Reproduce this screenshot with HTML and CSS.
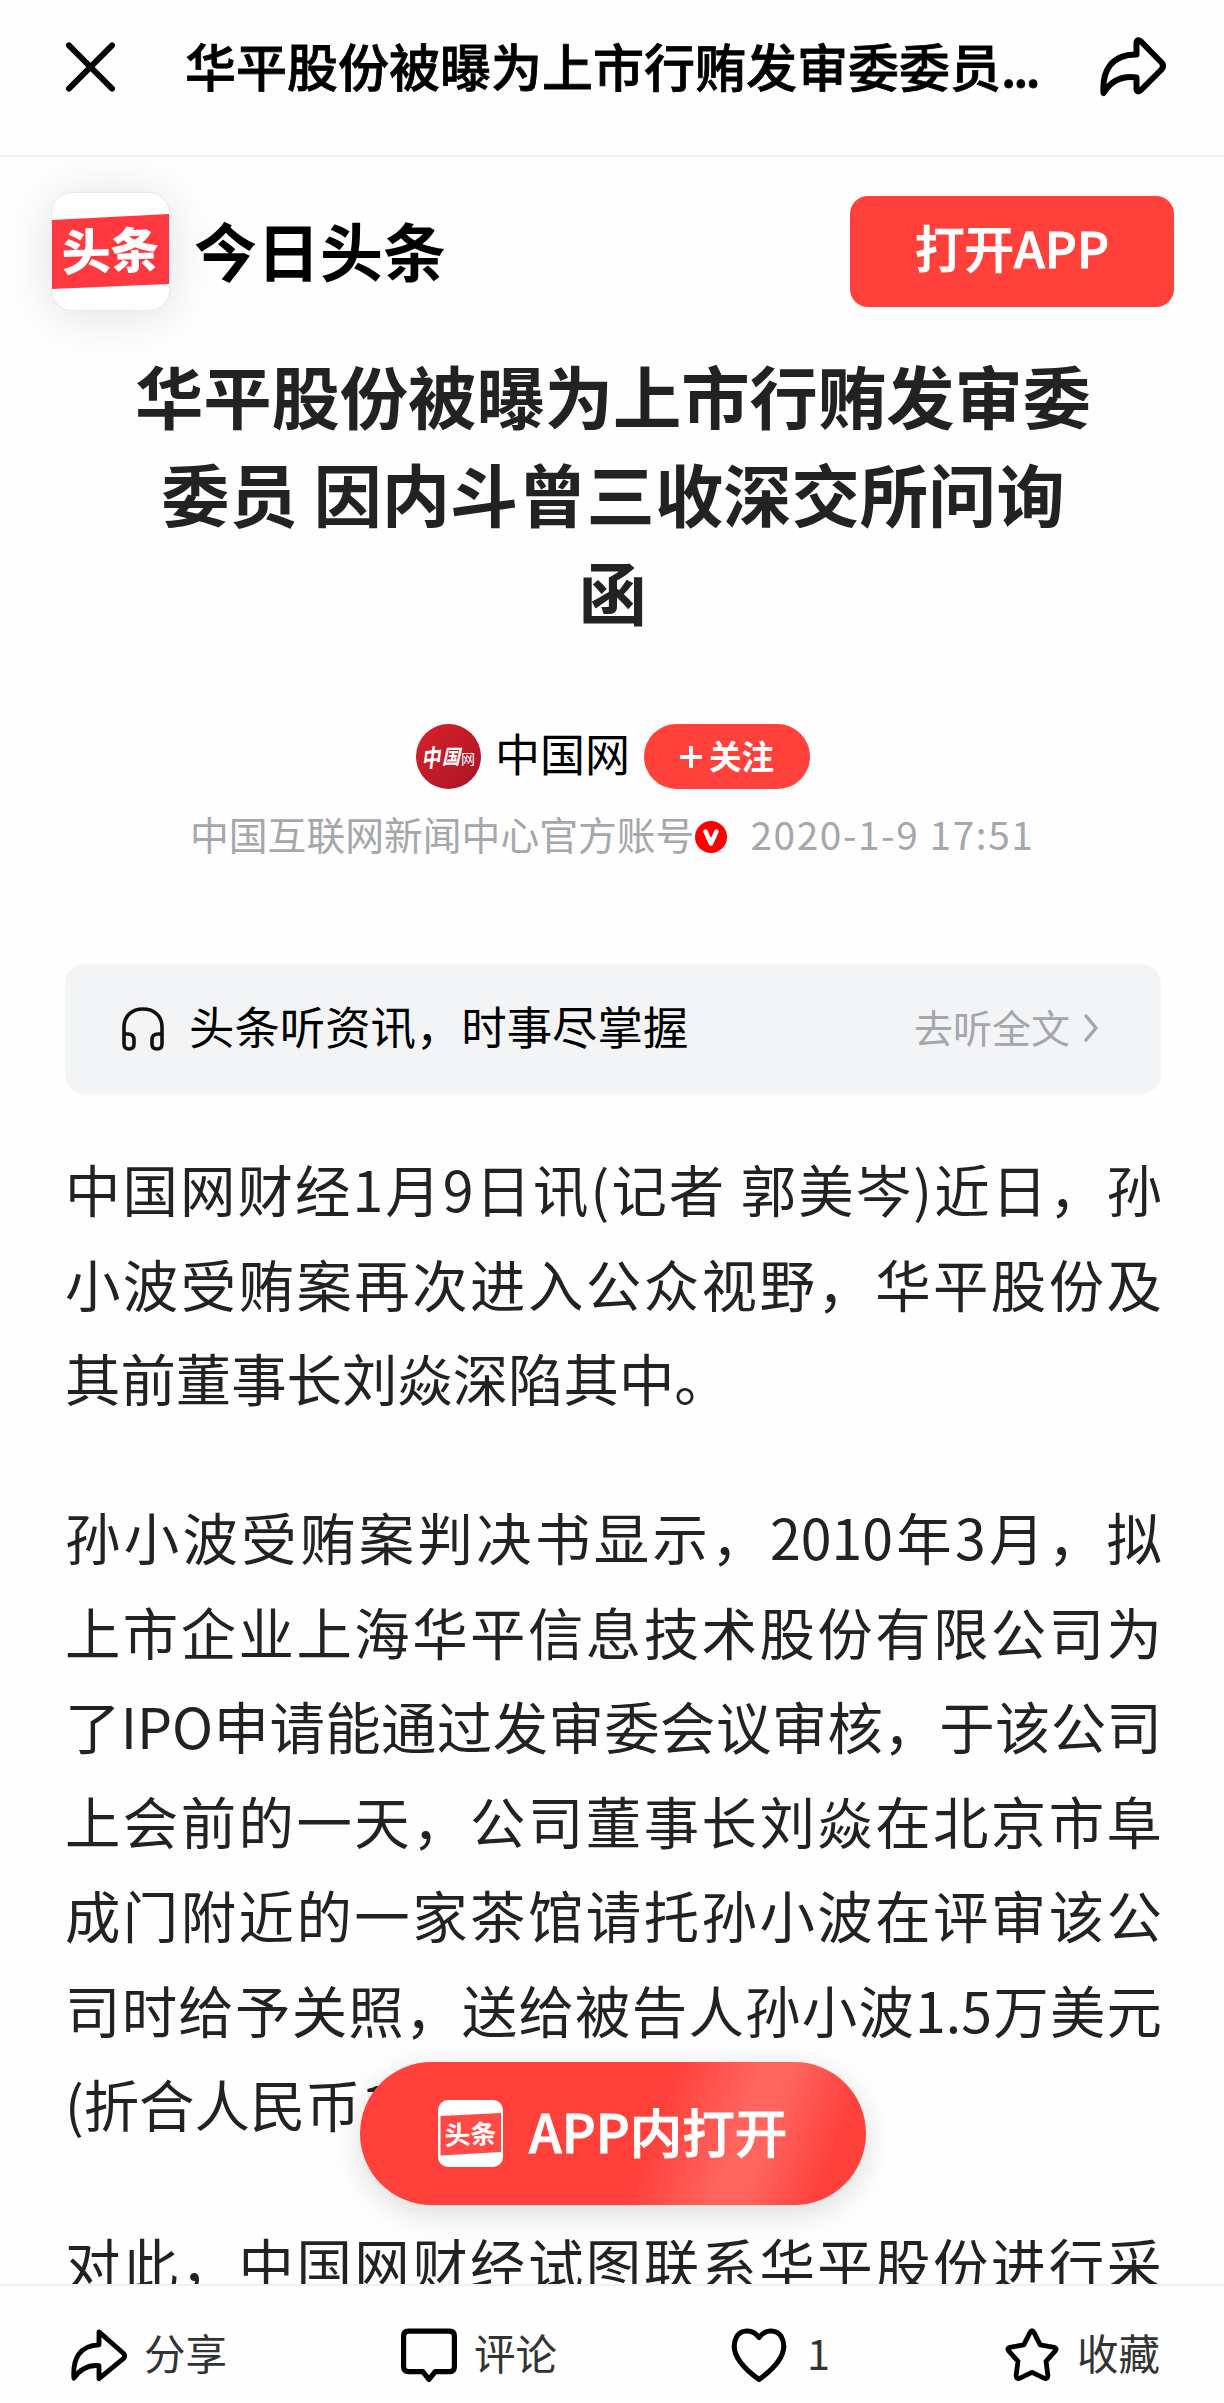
FILE: index.html
```html
<!DOCTYPE html>
<html lang="zh-CN">
<head>
  <meta charset="UTF-8">
  <title>华平股份被曝为上市行贿发审委委员 因内斗曾三收深交所问询函</title>
  <link rel="stylesheet" href="styles.css">
</head>
<body>
  <div class="page">
    <header class="topbar">
      <svg class="close" viewBox="0 0 50 50"><path d="M3 3L47 47M47 3L3 47"/></svg>
      <div class="topbar-title">华平股份被曝为上市行贿发审委委员<span class="dots">...</span></div>
      <svg class="share" viewBox="0 0 66 60"><path d="M36.500 17.500V5.500Q37.500 1.500 41 4.500L61.500 25.500Q64.500 29 61.500 32.500L41 53Q37.500 56 36.500 52.500V40.500C22 38.500 11 44 3.500 56C2 34 11 17.500 36.500 17.500Z"/></svg>
    </header>

    <main class="content">
      <div class="app-bar">
        <svg class="logo" viewBox="0 0 117 117">
          <path class="band" d="M0 27L117 21V91L0 96Z"/>
          <text x="58.500" y="76" transform="rotate(-2 58 58)">头条</text>
        </svg>
        <div class="app-name">今日头条</div>
        <button class="open-app">打开APP</button>
      </div>

      <h1>华平股份被曝为上市行贿发审委<br>委员 因内斗曾三收深交所问询<br>函</h1>

      <div class="author">
        <svg class="avatar" viewBox="0 0 65 65">
          <defs>
            <linearGradient id="avatarBg" x1="0" y1="0" x2="1" y2="1">
              <stop offset="0" stop-color="#d8222c"/>
              <stop offset="1" stop-color="#a91425"/>
            </linearGradient>
          </defs>
          <circle cx="32.500" cy="32.500" r="32.500" fill="url(#avatarBg)"/>
          <text class="brush" x="5" y="43" font-size="24" textLength="19" lengthAdjust="spacingAndGlyphs" transform="rotate(-4 14 34)">中</text>
          <text class="brush" x="26" y="40" font-size="20" textLength="18" lengthAdjust="spacingAndGlyphs">国</text>
          <text class="thin" x="45" y="40" font-size="14">网</text>
        </svg>
        <span class="author-name">中国网</span>
        <button class="follow"><svg viewBox="0 0 22 22"><path d="M11 0V22M0 11H22"/></svg><span>关注</span></button>
      </div>
      <div class="meta">
        <span class="meta-desc">中国互联网新闻中心官方账号</span>
        <svg class="verified" viewBox="0 0 32 32"><circle cx="16" cy="16" r="16"/><path d="M10.500 10.500L16 22.500L21.500 10.500"/></svg>
        <span class="meta-time">2020-1-9 17:51</span>
      </div>

      <div class="listen">
        <svg class="headphone" viewBox="0 0 42 44"><path d="M2 36V20C2 9 10 2 21 2S40 9 40 20V36M2 27H6Q12 27 12 33V37Q12 42 7 42Q2 42 2 37ZM40 27H36Q30 27 30 33V37Q30 42 35 42Q40 42 40 37Z"/></svg>
        <span class="listen-title">头条听资讯，时事尽掌握</span>
        <span class="listen-more">去听全文</span>
        <svg class="chevron" viewBox="0 0 16 30"><path d="M3 3L13 15L3 27"/></svg>
      </div>

      <article>
        <p>
          <span class="line">中国网财经1月9日讯(记者 郭美岑)近日，孙</span>
          <span class="line">小波受贿案再次进入公众视野，华平股份及</span>
          <span class="line last">其前董事长刘焱深陷其中。</span>
        </p>
        <p>
          <span class="line">孙小波受贿案判决书显示，2010年3月，拟</span>
          <span class="line">上市企业上海华平信息技术股份有限公司为</span>
          <span class="line">了IPO申请能通过发审委会议审核，于该公司</span>
          <span class="line">上会前的一天，公司董事长刘焱在北京市阜</span>
          <span class="line">成门附近的一家茶馆请托孙小波在评审该公</span>
          <span class="line">司时给予关照，送给被告人孙小波1.5万美元</span>
          <span class="line last">(折合人民币1</span>
        </p>
        <p>
          <span class="line">对此，中国网财经试图联系华平股份进行采</span>
        </p>
      </article>
    </main>

    <button class="float-open">
      <svg class="float-logo" viewBox="0 0 65 67">
        <rect width="65" height="67" rx="10" fill="#fff"/>
        <path d="M2.500 16L63 13V52L2.500 55.500Z" fill="#ff4a45"/>
        <text x="32.500" y="44" transform="rotate(-2 32 34)">头条</text>
      </svg>
      <span>APP内打开</span>
    </button>

    <footer class="toolbar">
      <div class="tool tool-share">
        <svg viewBox="0 0 58 54"><path d="M29 3L54.500 25.500Q56.500 28 54.500 30.500L29 51.500V38C19 37 10 41 3 51C1.500 31 9 17 29 16.500Z"/></svg><span>分享</span>
      </div>
      <div class="tool tool-comment">
        <svg viewBox="0 0 54 52"><path d="M7 3H47Q51.500 3 51.500 8V37Q51.500 42 47 42H33L27 49.500L21 42H7Q2.500 42 2.500 37V8Q2.500 3 7 3Z"/></svg><span>评论</span>
      </div>
      <div class="tool tool-like">
        <svg viewBox="0 0 56 54"><path d="M28 9.500C22 1 11 1 6 8C-2 22 8 37 28 51.500C48 37 58 22 50 8C45 1 34 1 28 9.500Z"/></svg><span>1</span>
      </div>
      <div class="tool tool-star">
        <svg viewBox="0 0 56 56"><path d="M26 4.500Q28 1 30 4.500L36.500 17.500L51 20Q54.500 21 52 24L42.500 34.500L44.500 49.500Q44 53.500 40.500 52L28 46L15.500 52Q12 53.500 11.500 49.500L13.500 34.500L4 24Q1.500 21 5 20L19.500 17.500Z"/></svg><span>收藏</span>
      </div>
    </footer>
  </div>
</body>
</html>
```
FILE: styles.css
```css
* {
  box-sizing: border-box;
}

body {
  margin: 0;
  background: #fefefe;
  font-family: "Noto Sans CJK SC", "Noto Sans", sans-serif;
  color: #222;
}

svg {
  display: block;
  flex: none;
  fill: none;
  stroke-linecap: round;
  stroke-linejoin: round;
}

button {
  border: none;
  padding: 0;
  font-family: inherit;
  color: #fff;
  background: #ff403b;
}

.page {
  position: relative;
  display: flex;
  flex-direction: column;
  width: 1224px;
  height: 2403px;
  overflow: hidden;
}

/* top bar */
.topbar {
  display: flex;
  align-items: center;
  flex: none;
  height: 157px;
  padding: 0 58px 22px 66px;
  border-bottom: 2px solid #eee;
  color: #000;
}

.close {
  width: 49px;
  height: 50px;
  stroke: #000;
  stroke-width: 6;
}

.topbar-title {
  flex: 1;
  margin-left: 70px;
  padding-bottom: 3px;
  font-size: 51px;
  font-weight: 500;
  line-height: 70px;
  white-space: nowrap;
  -webkit-text-stroke: 0.800px #000;
}

.dots {
  letter-spacing: -3px;
}

.share {
  width: 66px;
  height: 60px;
  stroke: #000;
  stroke-width: 6;
}

/* article area */
.content {
  flex: 1;
  min-height: 0;
  overflow: hidden;
}

.app-bar {
  display: flex;
  align-items: center;
  height: 116px;
  margin: 36px 50px 0 52px;
}

.logo {
  width: 117px;
  height: 117px;
  border-radius: 20px;
  background: #fff;
  box-shadow: 0 0 0 1px #e8e8e8, 0 4px 50px rgba(0, 0, 0, 0.12);
}

.logo .band {
  fill: #ff373e;
}

.logo text,
.float-logo text {
  fill: #fff;
  font-size: 49px;
  font-weight: 900;
  text-anchor: middle;
}

.app-name {
  margin-left: 25px;
  padding-bottom: 5px;
  font-size: 63px;
  font-weight: 700;
  line-height: 80px;
  color: #000;
}

.open-app {
  width: 324px;
  height: 111px;
  margin-left: auto;
  padding-bottom: 9px;
  border-radius: 18px;
  font-size: 49.500px;
  font-weight: 500;
  -webkit-text-stroke: 1px #fff;
}

h1 {
  margin: 37px 0 0 2px;
  text-align: center;
  font-size: 68.300px;
  font-weight: 700;
  line-height: 98px;
}

.author {
  display: flex;
  align-items: center;
  margin: 84px 0 0 416px;
  height: 65px;
}

.avatar {
  width: 65px;
  height: 65px;
}

.avatar text {
  fill: #fff;
}

.avatar .brush {
  font-weight: 700;
  font-style: italic;
}

.avatar .thin {
  font-weight: 400;
}

.author-name {
  margin-left: 14px;
  padding-bottom: 8px;
  font-size: 45px;
  line-height: 60px;
  color: #000;
}

.follow {
  display: flex;
  align-items: center;
  justify-content: center;
  gap: 7px;
  width: 166px;
  height: 65px;
  margin-left: 14px;
  border-radius: 33px;
  font-size: 32.500px;
  font-weight: 700;
}

.follow span {
  padding-bottom: 5px;
}

.follow svg {
  width: 22px;
  height: 22px;
  stroke: #fff;
  stroke-width: 4;
  stroke-linecap: butt;
}

.meta {
  display: flex;
  align-items: center;
  height: 60px;
  margin: 17px 0 0 190px;
  font-size: 38.800px;
  color: #a5a7ab;
}

.meta span {
  padding-bottom: 6px;
}

.verified {
  width: 32px;
  height: 32px;
  margin: 2px 0 0 1px;
  stroke: #fff;
  stroke-width: 4.500;
}

.verified circle {
  fill: #f00;
  stroke: none;
}

.meta-time {
  margin-left: 23px;
  letter-spacing: 1.600px;
}

.listen {
  display: flex;
  align-items: center;
  height: 130px;
  margin: 98px 63px 0 65px;
  padding: 0 62px 0 57px;
  border-radius: 20px;
  background: #f3f4f6;
  color: #000;
}

.headphone {
  width: 42px;
  height: 44px;
  stroke: #111;
  stroke-width: 3.600;
}

.listen-title {
  margin-left: 25px;
  padding-bottom: 8px;
  font-size: 45.400px;
}

.listen-more {
  margin-left: auto;
  padding-bottom: 6px;
  font-size: 39px;
  color: #a5a7ab;
}

.chevron {
  width: 16px;
  height: 30px;
  margin: 0 0 3px 13px;
  stroke: #a5a7ab;
  stroke-width: 3.500;
}

article {
  margin: 47px 62px 0 65px;
  font-size: 55.400px;
  line-height: 94.500px;
}

p {
  margin: 0 0 64.500px;
}

.line {
  display: block;
  white-space: nowrap;
  text-align: justify;
  text-align-last: justify;
}

.last {
  text-align-last: left;
}

/* floating button */
.float-open {
  position: absolute;
  left: 360px;
  top: 2062px;
  display: flex;
  align-items: center;
  width: 506px;
  height: 143px;
  padding-left: 78px;
  border-radius: 72px;
  background: linear-gradient(110deg, #ff403b 57%, #ff645f 72%, #ff645f 78%, #ff403b 91%);
  box-shadow: 0 8px 30px rgba(0, 0, 0, 0.14);
  font-size: 52.500px;
  font-weight: 500;
}

.float-open span {
  margin-left: 26px;
  padding-bottom: 8px;
  -webkit-text-stroke: 1px #fff;
}

.float-logo {
  width: 65px;
  height: 67px;
}

.float-logo text {
  font-size: 26px;
  font-weight: 700;
}

/* bottom toolbar */
.toolbar {
  display: flex;
  flex: none;
  height: 119px;
  padding: 19px 0 0 71px;
  border-top: 2px solid #f0f0f0;
  background: #fefefe;
}

.tool {
  display: flex;
  align-items: center;
  height: 100px;
  font-size: 41.500px;
  color: #333;
}

.tool span {
  padding-bottom: 6px;
}

.tool svg {
  width: 56px;
  height: 54px;
  margin-right: 17px;
  stroke: #000;
  stroke-width: 5;
}

.tool-share,
.tool-comment {
  width: 330px;
}

.tool-like {
  width: 273px;
}

.tool-like span {
  padding-left: 3px;
}
```
